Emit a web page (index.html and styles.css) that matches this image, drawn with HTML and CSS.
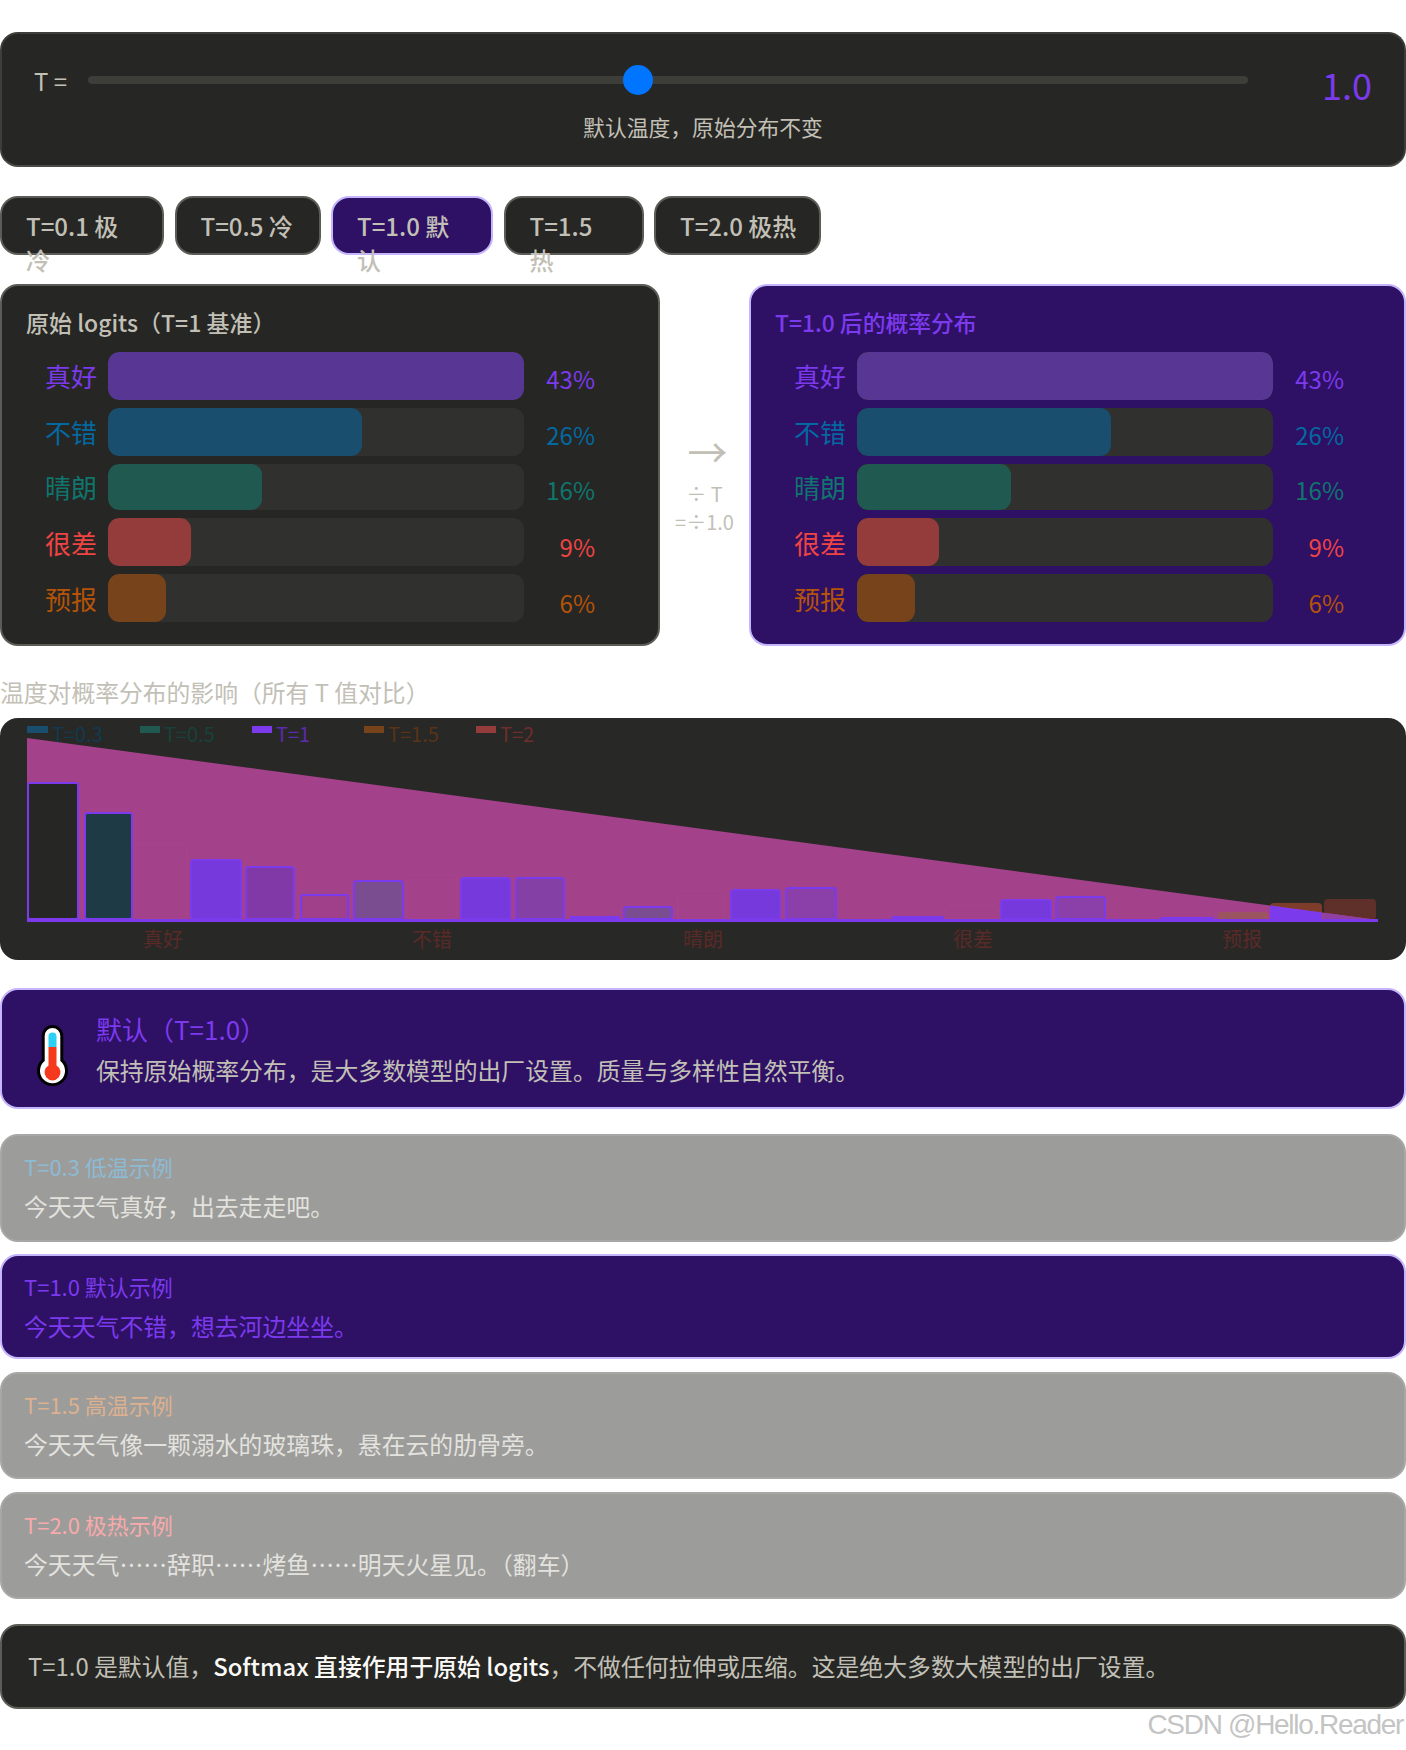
FILE: index.html
```html
<!DOCTYPE html>
<html lang="zh-CN">
<head>
<meta charset="UTF-8">
<title>Temperature</title>
<link rel="stylesheet" href="styles.css">
</head>
<body>
<div class="page">

  <div class="sliderCard">
    <div class="sliderRow">
      <span class="sliderLabel">T =</span>
      <input class="slider" type="range" min="0.1" max="2" step="0.1" value="1">
      <span class="sliderValue">1.0</span>
    </div>
    <p class="sliderHint">默认温度，原始分布不变</p>
  </div>

  <div class="presets">
    <div class="preset">T=0.1 极<br>冷</div>
    <div class="preset">T=0.5 冷</div>
    <div class="preset active">T=1.0 默<br>认</div>
    <div class="preset">T=1.5<br>热</div>
    <div class="preset">T=2.0 极热</div>
  </div>

  <div class="compare">
    <div class="panel">
      <p class="panelTitle">原始 logits（T=1 基准）</p>
      <div class="row c1"><span class="word">真好</span><div class="track"><div class="fill" style="width:100%"></div></div><span class="pct">43%</span></div>
      <div class="row c2"><span class="word">不错</span><div class="track"><div class="fill" style="width:61%"></div></div><span class="pct">26%</span></div>
      <div class="row c3"><span class="word">晴朗</span><div class="track"><div class="fill" style="width:37%"></div></div><span class="pct">16%</span></div>
      <div class="row c4"><span class="word">很差</span><div class="track"><div class="fill" style="width:20%"></div></div><span class="pct">9%</span></div>
      <div class="row c5"><span class="word">预报</span><div class="track"><div class="fill" style="width:14%"></div></div><span class="pct">6%</span></div>
    </div>

    <div class="arrow">
      <span class="arrowGlyph">→</span>
      <span class="arrowText">÷ T</span>
      <span class="arrowText">=÷1.0</span>
    </div>

    <div class="panel result">
      <p class="panelTitle">T=1.0 后的概率分布</p>
      <div class="row c1"><span class="word">真好</span><div class="track"><div class="fill" style="width:100%"></div></div><span class="pct">43%</span></div>
      <div class="row c2"><span class="word">不错</span><div class="track"><div class="fill" style="width:61%"></div></div><span class="pct">26%</span></div>
      <div class="row c3"><span class="word">晴朗</span><div class="track"><div class="fill" style="width:37%"></div></div><span class="pct">16%</span></div>
      <div class="row c4"><span class="word">很差</span><div class="track"><div class="fill" style="width:19.8%"></div></div><span class="pct">9%</span></div>
      <div class="row c5"><span class="word">预报</span><div class="track"><div class="fill" style="width:14%"></div></div><span class="pct">6%</span></div>
    </div>
  </div>

  <p class="chartTitle">温度对概率分布的影响（所有 T 值对比）</p>
  <div class="chartCard">
    <svg class="chart" viewBox="0 0 1406 242" width="1406" height="242">
      <!-- legend -->
      <rect class="s03" x="27" y="8" width="21" height="7"/>
      <text class="legend t03" x="52" y="24">T=0.3</text>
      <rect class="s05" x="140" y="8" width="20" height="7"/>
      <text class="legend t05" x="164" y="24">T=0.5</text>
      <rect class="s10" x="252" y="8" width="20" height="7"/>
      <text class="legend t10" x="276" y="24">T=1</text>
      <rect class="s15" x="364" y="8" width="20" height="7"/>
      <text class="legend t15" x="388" y="24">T=1.5</text>
      <rect class="s20" x="476" y="8" width="20" height="7"/>
      <text class="legend t20" x="500" y="24">T=2</text>

      <!-- last two bars stick out above the area -->
      <rect class="brown" x="1270" y="185" width="52" height="17" rx="4"/>
      <rect class="darkRed" x="1324" y="181" width="52" height="21" rx="4"/>

      <polygon class="area" points="27,20 1378,202 27,202"/>

      <!-- bars -->
      <rect class="bar b1" x="28" y="65" width="50" height="136" rx="2"/>
      <rect class="bar b2" x="85" y="95" width="47" height="106" rx="2"/>
      <rect class="bar faint" x="136" y="126" width="51" height="75" rx="2"/>
      <rect class="bar b4" x="191" y="142" width="50" height="59" rx="3"/>
      <rect class="bar b5" x="246" y="149" width="48" height="52" rx="3"/>
      <rect class="bar b6" x="301" y="177" width="47" height="24" rx="2"/>
      <rect class="bar b7" x="354" y="163" width="49" height="38" rx="3"/>
      <rect class="bar faint" x="407" y="157" width="50" height="44" rx="2"/>
      <rect class="bar b4" x="461" y="160" width="49" height="41" rx="3"/>
      <rect class="bar b5b" x="516" y="160" width="48" height="41" rx="3"/>
      <rect class="solid" x="570" y="198" width="50" height="4"/>
      <rect class="bar b7" x="624" y="189" width="48" height="12" rx="3"/>
      <rect class="bar faint" x="678" y="173" width="46" height="28" rx="2"/>
      <rect class="bar b4" x="731" y="172" width="49" height="29" rx="3"/>
      <rect class="bar b5c" x="786" y="170" width="50" height="31" rx="3"/>
      <rect class="solid" x="892" y="198" width="52" height="4"/>
      <rect class="bar faint" x="946" y="188" width="52" height="13" rx="2"/>
      <rect class="bar b4" x="1001" y="182" width="50" height="19" rx="3"/>
      <rect class="bar b5c" x="1056" y="179" width="49" height="22" rx="3"/>
      <rect class="solid" x="1161" y="199" width="53" height="3"/>
      <rect class="rose" x="1218" y="194" width="50" height="8" rx="3"/>
      <polygon class="solid" points="1270,187.5 1322,194.5 1322,202 1270,202"/>
      <polygon class="under" points="1324,194.7 1376,201.7 1376,202 1324,202"/>

      <rect class="solid" x="27" y="201" width="1351" height="3"/>

      <!-- axis -->
      <text class="axis" x="163" y="229">真好</text>
      <text class="axis" x="432" y="229">不错</text>
      <text class="axis" x="703" y="229">晴朗</text>
      <text class="axis" x="973" y="229">很差</text>
      <text class="axis" x="1242" y="229">预报</text>
    </svg>
  </div>

  <div class="infoCard">
    <svg class="thermo" viewBox="0 0 31 63" width="31" height="63">
      <path class="thermoOutline" d="M4.7 34.5V11a10.8 11 0 0 1 21.6 0v23.5a15.5 15.5 0 1 1-21.6 0z"/>
      <path class="thermoGlass" d="M7.7 36V11a7.8 8 0 0 1 15.6 0v25a12.5 12.5 0 1 1-15.6 0z"/>
      <path class="thermoCold" d="M11.5 22V11.5a4 4 0 0 1 8 0V22z"/>
      <path class="thermoHot" d="M11.5 22h8v18.5a8 8 0 1 1-8 0z"/>
    </svg>
    <div>
      <p class="infoTitle">默认（T=1.0）</p>
      <p class="infoBody">保持原始概率分布，是大多数模型的出厂设置。质量与多样性自然平衡。</p>
    </div>
  </div>

  <div class="sample cold">
    <p class="sampleTitle">T=0.3 低温示例</p>
    <p class="sampleBody">今天天气真好，出去走走吧。</p>
  </div>
  <div class="sample current">
    <p class="sampleTitle">T=1.0 默认示例</p>
    <p class="sampleBody">今天天气不错，想去河边坐坐。</p>
  </div>
  <div class="sample warm">
    <p class="sampleTitle">T=1.5 高温示例</p>
    <p class="sampleBody">今天天气像一颗溺水的玻璃珠，悬在云的肋骨旁。</p>
  </div>
  <div class="sample hot">
    <p class="sampleTitle">T=2.0 极热示例</p>
    <p class="sampleBody">今天天气……辞职……烤鱼……明天火星见。（翻车）</p>
  </div>

  <div class="note">T=1.0 是默认值，<strong>Softmax 直接作用于原始 logits</strong>，不做任何拉伸或压缩。这是绝大多数大模型的出厂设置。</div>

  <p class="watermark">CSDN @Hello.Reader</p>
</div>
</body>
</html>
```

FILE: styles.css
```css
body {
    margin: 0;
    background: #fff;
    font-family: "Noto Sans CJK SC", "Noto Sans", sans-serif;
    color: #c2c0b6;
}
p {
    margin: 0;
}
.page {
    padding-top: 32px;
}

/* slider */
.sliderCard {
    box-sizing: border-box;
    height: 135px;
    padding: 28px 32px 0;
    background: #262624;
    border: 2px solid #3d3d3a;
    border-bottom-color: #4a4a46;
    border-radius: 18px;
}
.sliderRow {
    display: flex;
    align-items: flex-start;
}
.sliderLabel {
    width: 54px;
    font-size: 24px;
    line-height: 33px;
    margin-top: 2px;
}
.slider {
    -webkit-appearance: none;
    appearance: none;
    flex: 1;
    height: 30px;
    margin: 3px 0 0;
    background: transparent;
}
.slider::-webkit-slider-runnable-track {
    height: 8px;
    border-radius: 4px;
    background: #3d3d3a;
}
.slider::-webkit-slider-thumb {
    -webkit-appearance: none;
    width: 30px;
    height: 30px;
    margin-top: -11px;
    border-radius: 50%;
    background: #0075ff;
}
.sliderValue {
    width: 124px;
    margin-top: -5px;
    text-align: right;
    font-size: 36px;
    line-height: 54px;
    color: #7c3aed;
}
.sliderHint {
    margin-top: -1px;
    text-align: center;
    font-size: 21.8px;
    line-height: 33px;
}

/* preset buttons */
.presets {
    display: flex;
    gap: 10.5px;
    margin-top: 29px;
}
.preset {
    box-sizing: border-box;
    height: 59px;
    padding: 11px 0 0 24px;
    font-size: 24px;
    font-weight: 500;
    line-height: 34px;
    background: #262624;
    border: 2px solid #5c5c57;
    border-radius: 18px;
}
.preset:nth-child(1) { width: 164px; }
.preset:nth-child(2) { width: 146px; }
.preset:nth-child(3) { width: 162px; }
.preset:nth-child(4) { width: 140px; }
.preset:nth-child(5) { width: 167px; }
.preset.active {
    background: #2e1065;
    border-color: #c4b5fd;
}

/* logits and probabilities */
.compare {
    display: grid;
    grid-template-columns: 660px 89px 1fr;
    margin-top: 29px;
}
.panel {
    box-sizing: border-box;
    height: 362px;
    padding: 20px 24px;
    background: #262624;
    border: 2px solid #5c5c57;
    border-radius: 18px;
}
.panel.result {
    background: #2e1065;
    border-color: #c4b5fd;
}
.panelTitle {
    margin-bottom: 13px;
    font-size: 23px;
    font-weight: 500;
    line-height: 33px;
}
.result .panelTitle {
    font-size: 22.8px;
    color: #7c3aed;
}
.row {
    display: flex;
    align-items: center;
    gap: 11px;
    height: 48px;
    margin-bottom: 8px;
}
.row.c3 {
    height: 46px;
}
.word {
    width: 71px;
    margin-top: -1px;
    text-align: right;
    font-size: 26px;
}
.track {
    width: 416px;
    height: 100%;
    border-radius: 11px;
    background: #30302e;
    overflow: hidden;
}
.fill {
    height: 100%;
    border-radius: 11px;
}
.pct {
    width: 60px;
    padding-top: 5px;
    text-align: right;
    font-size: 24px;
}
.c4 .word, .c5 .word {
    margin-top: 1px;
}
.c4 .pct, .c5 .pct {
    padding-top: 8px;
}
.c1 { color: #7c3aed; }
.c2 { color: #0369a1; }
.c3 { color: #0f766e; }
.c4 { color: #ef4444; }
.c5 { color: #b45309; }
.c1 .fill { background: #583693; }
.c2 .fill { background: #1a4e6e; }
.c3 .fill { background: #205950; }
.c4 .fill { background: #943b3b; }
.c5 .fill { background: #77431a; }

.arrow {
    display: flex;
    flex-direction: column;
    align-items: center;
    padding-top: 142px;
}
.arrowGlyph {
    margin-left: 6px;
    margin-bottom: 4px;
    font-size: 40px;
    line-height: 50px;
}
.arrowText {
    font-size: 20px;
    line-height: 28px;
}

/* chart */
.chartTitle {
    height: 44px;
    margin-top: 28px;
    font-size: 23.8px;
    line-height: 36px;
}
.chartCard {
    height: 242px;
    background: #282826;
    border-radius: 18px;
    overflow: hidden;
}
.chart {
    display: block;
}
.legend {
    font-size: 20px;
}
.axis {
    font-size: 20px;
    text-anchor: middle;
    fill: #5a2a28;
}
.s03 { fill: #1a4e6e; }
.s05 { fill: #205950; }
.s10 { fill: #7c3aed; }
.s15 { fill: #77431a; }
.s20 { fill: #943b3b; }
.t03 { fill: #113a52; }
.t05 { fill: #17423c; }
.t10 { fill: #5b2bb0; }
.t15 { fill: #5a3317; }
.t20 { fill: #6f2e2e; }
.area { fill: #a3428a; }
.brown { fill: #7e3d2a; }
.darkRed { fill: #5f2f2a; }
.rose { fill: #9c5560; }
.solid { fill: #7c3aed; }
.under { fill: #9040a0; }
.bar {
    stroke: #7c3aed;
    stroke-width: 2;
}
.bar.faint { fill: #a3428a; stroke: #a6458c; stroke-width: 1; }
.b1 { fill: #262624; }
.b2 { fill: #1e3a45; }
.b4 { fill: #7539dc; }
.b5 { fill: #8239a8; }
.b5b { fill: #8540a6; }
.b5c { fill: #8a40a8; }
.b6 { fill: #a03f8a; }
.b7 { fill: #7a4c90; }

/* explanation */
.infoCard {
    box-sizing: border-box;
    display: flex;
    align-items: center;
    gap: 28px;
    height: 121px;
    margin-top: 28px;
    padding: 2px 35px 0;
    background: #2e1065;
    border: 2px solid #c4b5fd;
    border-radius: 18px;
}
.thermo {
    flex: none;
    margin-top: 14px;
}
.thermoOutline { fill: #000; }
.thermoGlass { fill: #fff; }
.thermoCold { fill: #2bd0f2; }
.thermoHot { fill: #f4391c; }
.infoTitle {
    margin-bottom: 5px;
    font-size: 26px;
    line-height: 36px;
    color: #7c3aed;
}
.infoBody {
    font-size: 23.85px;
    line-height: 36px;
}

/* samples */
.sample {
    box-sizing: border-box;
    height: 107px;
    margin-top: 13px;
    padding: 14px 22px 0;
    background: #262624;
    border: 2px solid #3d3d3a;
    border-radius: 18px;
    opacity: 0.45;
}
.sample.cold {
    height: 108px;
    margin-top: 25px;
}
.sample.current {
    height: 105px;
    margin-top: 12px;
    opacity: 1;
    background: #2e1065;
    border-color: #c4b5fd;
}
.sampleTitle {
    margin-bottom: 5px;
    font-size: 22px;
    line-height: 33px;
}
.sampleBody {
    font-size: 23.85px;
    line-height: 36px;
}
.cold .sampleTitle { color: #0369a1; }
.current .sampleTitle, .current .sampleBody { color: #7c3aed; }
.warm .sampleTitle { color: #b45309; }
.hot .sampleTitle { color: #ef4444; }

.note {
    box-sizing: border-box;
    height: 85px;
    margin-top: 25px;
    padding: 22px 26px 0;
    font-size: 23.85px;
    line-height: 36px;
    background: #262624;
    border: 2px solid #5c5c57;
    border-radius: 18px;
}
.note strong {
    font-weight: 500;
    color: #faf9f5;
}
.watermark {
    padding-right: 3px;
    text-align: right;
    font-family: "Liberation Sans", sans-serif;
    font-size: 28px;
    letter-spacing: -1.3px;
    line-height: 32px;
    color: #c4c4c4;
}
```
